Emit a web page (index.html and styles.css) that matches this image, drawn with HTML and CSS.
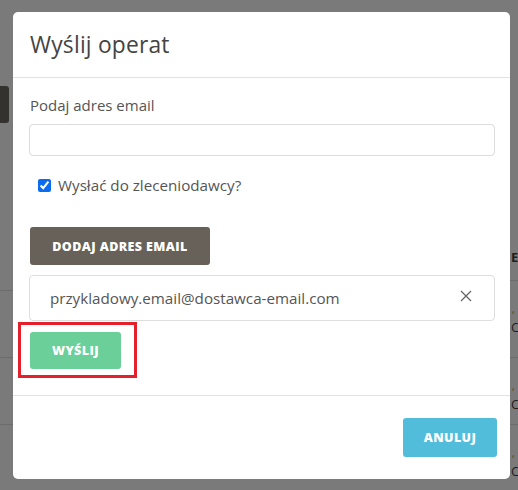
FILE: index.html
```html
<!DOCTYPE html>
<html lang="pl">
<head>
<meta charset="utf-8">
<link rel="stylesheet" href="styles.css">
</head>
<body>
<div class="page">
  <div class="side-tab"></div>
  <div class="row-line l1"></div>
  <div class="row-line l2"></div>
  <div class="row-line l3"></div>
  <div class="row-line r1"></div>
  <div class="row-line r2"></div>
  <div class="row-line r3"></div>
  <span class="frag f1">E</span>
  <span class="frag f2">,</span>
  <span class="frag f3">C</span>
  <span class="frag f4">,</span>
  <span class="frag f5">C</span>
  <span class="frag f6">,</span>
  <span class="frag f7">C</span>
</div>
<div class="modal">
  <div class="modal-header">
    <h1 class="modal-title">Wyślij operat</h1>
  </div>
  <div class="modal-body">
    <label class="field-label" for="email">Podaj adres email</label>
    <input class="field-input" id="email" type="text">
    <label class="check">
      <input type="checkbox" checked>
      <span>Wysłać do zleceniodawcy?</span>
    </label>
    <button class="btn btn-dark">Dodaj adres email</button>
    <div class="email-item">
      <span>przykladowy.email@dostawca-email.com</span>
      <svg class="close" width="12" height="12" viewBox="0 0 12 12"><path d="M1 1 L11 11 M11 1 L1 11" stroke="#666" stroke-width="1.3" fill="none"/></svg>
    </div>
    <div class="highlight">
      <button class="btn btn-green">Wyślij</button>
    </div>
  </div>
  <div class="modal-footer">
    <button class="btn btn-blue">Anuluj</button>
  </div>
</div>
</body>
</html>
```
FILE: styles.css
```css
html, body {
  margin: 0;
  padding: 0;
  width: 518px;
  height: 490px;
  overflow: hidden;
  background: #7a7a7a;
  font-family: "Open Sans", "DejaVu Sans", sans-serif;
}
.page {
  position: absolute;
  inset: 0;
}
.side-tab {
  position: absolute;
  left: 0;
  top: 86px;
  width: 9px;
  height: 37px;
  background: #33322e;
  border-radius: 0 3px 3px 0;
}
.row-line {
  position: absolute;
  height: 1px;
  background: #6c6c6c;
}
.l1, .l2, .l3 { left: 0; width: 13px; }
.l1 { top: 290px; }
.l2 { top: 357px; }
.l3 { top: 424px; }
.r1, .r2, .r3 { left: 510px; width: 8px; }
.r1 { top: 280px; }
.r2 { top: 357px; }
.r3 { top: 424px; }
.frag {
  position: absolute;
  left: 511px;
  font-size: 13px;
  color: #1e1e1e;
  line-height: 1;
}
.f1 { top: 251px; font-weight: 700; }
.f2 { top: 304px; font-size: 10px; left: 512px; color: #5a3a1a; }
.f3 { top: 321px; }
.f4 { top: 381px; font-size: 10px; left: 512px; color: #5a3a1a; }
.f5 { top: 398px; }
.f6 { top: 448px; font-size: 10px; left: 512px; color: #5a3a1a; }
.f7 { top: 465px; }

.modal {
  position: absolute;
  left: 13px;
  top: 12px;
  width: 497px;
  height: 467px;
  background: #fff;
  border-radius: 5px;
  display: flex;
  flex-direction: column;
  color: #555;
}
.modal-header {
  height: 65px;
  border-bottom: 1px solid #e2e2e2;
  padding: 0 17px;
  display: flex;
  align-items: center;
  flex: none;
}
.modal-title {
  margin: 0;
  font-size: 22.8px;
  font-weight: 400;
  color: #444;
  letter-spacing: 0.2px;
}
.modal-body {
  padding: 17px 15px 0 16px;
  display: flex;
  flex-direction: column;
  height: 318px;
  flex: none;
  border-bottom: 1px solid #e2e2e2;
  box-sizing: border-box;
}
.field-label {
  font-size: 15px;
  color: #555;
  line-height: 20px;
  margin-left: 1px;
}
.field-input {
  margin-top: 9px;
  height: 32px;
  box-sizing: border-box;
  border: 1px solid #dcdcdc;
  border-radius: 4px;
  width: 466px;
}
.check {
  margin-top: 19px;
  margin-left: 9px;
  display: flex;
  align-items: center;
  gap: 7px;
  font-size: 15.2px;
  color: #555;
}
.check input {
  margin: 0;
  width: 13px;
  height: 13px;
  accent-color: #0a6cf0;
}
.btn {
  border: none;
  color: #fff;
  font-family: "Open Sans", "DejaVu Sans", sans-serif;
  font-weight: 800;
  font-size: 12.5px;
  text-transform: uppercase;
  border-radius: 3px;
  letter-spacing: 0.4px;
  padding: 0;
}
.btn-dark {
  margin-top: 32px;
  margin-left: 1px;
  width: 180px;
  height: 38px;
  background: #686159;
}
.email-item {
  margin-top: 10px;
  height: 46px;
  width: 466px;
  box-sizing: border-box;
  border: 1px solid #dedede;
  border-radius: 4px;
  display: flex;
  align-items: center;
  justify-content: space-between;
  padding: 0 22px 0 20px;
  font-size: 15.2px;
  color: #555;
}
.close { margin-top: -4px; }
.highlight {
  margin-top: 1px;
  margin-left: -11px;
  border: 3px solid #e4202c;
  padding: 7px 0 0 9px;
  box-sizing: border-box;
  width: 119px;
  height: 56px;
}
.btn-green {
  width: 91px;
  height: 37px;
  background: #6acf98;
}
.modal-footer {
  flex: 1;
  display: flex;
  justify-content: flex-end;
  align-items: flex-start;
  padding: 22px 13px 0 0;
}
.btn-blue {
  width: 94px;
  height: 39px;
  background: #52bcdb;
}
```
